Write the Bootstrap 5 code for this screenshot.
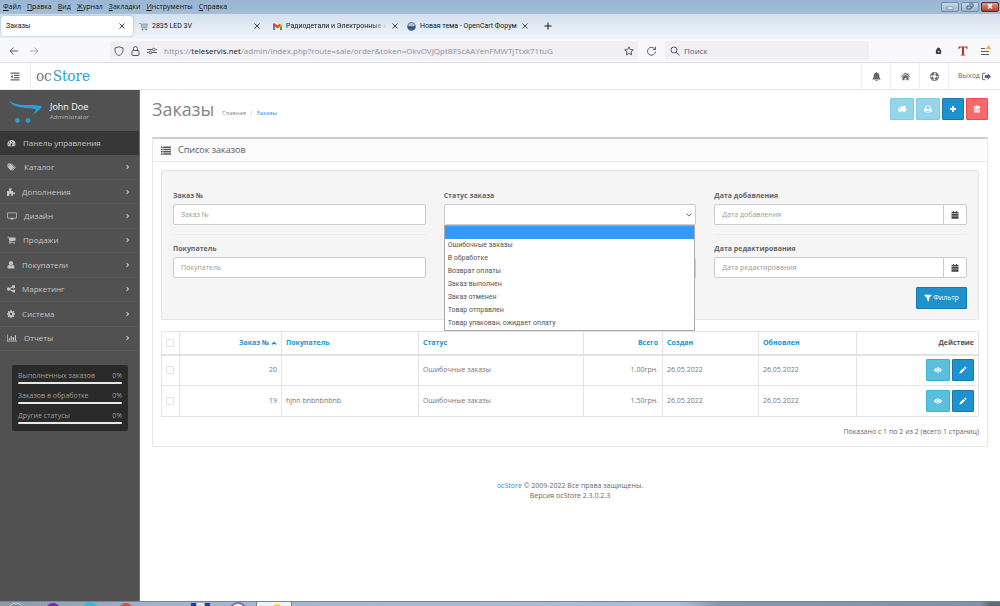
<!DOCTYPE html>
<html lang="ru">
<head>
<meta charset="utf-8">
<meta name="viewport" content="width=device-width, initial-scale=1">
<title>Заказы</title>
<link href="https://cdn.jsdelivr.net/npm/bootstrap@5.3.0/dist/css/bootstrap.min.css" rel="stylesheet">
<style>
:root{--blue:#1e91cf;--info:#5bc0de;--edge:#e8e8e8}
body{font:7px/10px "Open Sans","Noto Sans",sans-serif;color:#666;background:#fff}
button{font:inherit;color:inherit}
a{color:var(--blue);text-decoration:none}
svg{display:block;flex:none}
.ic{width:8px;height:8px;fill:currentColor}
.plain{background:none;border:0;padding:0}
/* browser frame */
.menubar{height:13px;background:linear-gradient(#9ab6d4,#a3bcd6);color:#111;padding-left:3px;gap:6px}
.winbtns{gap:2px;padding-right:1px}
.winbtn{width:18px;height:10px;border:1px solid #6f8cab;border-radius:2px;background:linear-gradient(#c9d8e8,#9db6d0);padding:0}
.winbtn.quit{background:linear-gradient(#dc9a8c,#b93a22);border-color:#6b2a24}
.winbtn svg{margin:auto}
.tabstrip{height:26px;background:linear-gradient(#d3e0ee,#f0f5fc);color:#15141a;padding:2px 1px 3px;border-top:1px solid #a9bed4;font-family:Roboto,sans-serif}
.btab{width:134px;padding:0 7px 0 5px;gap:4px}
.btab.active{width:132px;margin-right:1px;background:#fff;border-radius:3px;box-shadow:0 0 2px #8899aa}
.btab .fav{width:9px;height:9px}
.btab .label{white-space:nowrap;flex:1 1 auto;text-align:left}
.btab .ic{color:#444}
.btab .fade-end{-webkit-mask:linear-gradient(90deg,#000 85%,transparent)}
.addrbar{height:24px;background:#f9f9fb;border-bottom:1px solid #dcdce0;color:#5b5b66;font-size:8px}
.urlbox{background:#f0f0f4;height:19px;border-radius:2px;gap:7px}
.urlbox.location{margin-left:70px}
.urlbox.searchbox{flex:0 0 204px;gap:4px}
.tools{flex:0 0 131px}
.urlbox input{font:inherit;border:0;background:none;color:#5b5b66;padding:0;min-width:0}
.url{color:#8f8f98;white-space:nowrap}
.url b{font-weight:400;color:#15141a}
.stroke{fill:none;stroke:currentColor;stroke-width:1}
/* store header */
.topbar{height:27px;border-bottom:1px solid #e6e6e6}
.topbar .cell{width:29px;border-left:1px solid #eee;display:flex;align-items:center;justify-content:center;color:#666}
.topbar .cell .ic{width:9px;height:9px}
.topbar .cell.exit{width:52px;gap:2px}
.topbar .toggle{width:31px;border:0;border-right:1px solid #eee;background:none;padding:0}
.logo{font:15px/20px "DejaVu Serif Condensed","DejaVu Serif",serif;color:#777;padding-left:5px;gap:1px}
.logo span{color:#2a9fd0}
/* sidebar */
.side{width:140px;background:#515151;border-right:1px solid #6e6e6e;color:#c4c4c4}
.profile{height:41px;padding:2px 0 0 9px;gap:8px;color:#b5b5b5;font-size:6px;line-height:9px}
.profile strong{display:block;color:#fff;font-size:9px;font-weight:400;line-height:12px}
.sidemenu{height:220px;font-size:8px}
.sidemenu li{border-bottom:1px solid #595959;display:flex}
.sidemenu a{color:#c4c4c4;padding:0 8px 0 7px;gap:7px}
.sidemenu li.active{background:#373737;border-color:#373737}
.stats{margin:14px 11px 0 12px;background:#2a2a2a;border-radius:2px;padding:6px 6px 0;color:#9d9d9d;height:66px;gap:7px}
.stats .progress{height:2px;background:#e8e8e8;border-radius:1px;margin-top:1px}
/* content */
.page{padding:7px 13px 0 12px}
h1{font-size:18px;line-height:24px;color:#848484;margin:0}
.breadcrumb{font-size:6px;gap:4px;padding-top:7px}
.breadcrumb a.home{color:#8a8a8a}
.btn{--bs-btn-padding-x:0;--bs-btn-padding-y:0;--bs-btn-font-size:7px;--bs-btn-line-height:10px;--bs-btn-border-radius:1px;height:22px;width:24px;display:inline-flex;align-items:center;justify-content:center;color:#fff}
.btn .ic{width:8px;height:8px}
.btn-primary{--bs-btn-bg:#1e91cf;--bs-btn-border-color:#1978ab;width:22px}
.btn-info,.btn-info:disabled{background:var(--info);border-color:#39b3d7;color:#fff}
.btn-danger{--bs-btn-bg:#f56b6b;--bs-btn-border-color:#f24545;width:22px}
.btnrow{gap:2px}
.panel{border:1px solid var(--edge);border-top:2px solid #cfcfcf;margin-top:16px}
.panel-head{height:23px;background:#fcfcfc;border-bottom:1px solid var(--edge);padding-left:8px;gap:7px;font-size:9px;color:#595959}
.panel-main{padding:8px 8px 9px}
.filters{background:#f5f5f5;border:1px solid #e4e4e4;border-radius:2px;padding:10px 11px 11px;margin-bottom:11px;height:150px}
.filters .cols{display:grid;grid-template-columns:repeat(3,1fr);column-gap:18px}
.grp{height:53px;padding-top:10px}
.grp + .grp{border-top:1px solid #ededed;padding-top:9px}
.grp label{display:block;font-weight:700;margin-bottom:3px}
.form-control,.form-select{font-size:7px;line-height:10px;height:21px;min-height:0;padding:0 7px;border:1px solid #ccc;border-radius:2px;color:#555}
.form-control::placeholder{color:#999}
.form-select{background-size:6px 6px;background-position:right 3px center;border-radius:2px}
.input-group .btn-cal{width:24px;height:21px;border:1px solid #ccc;background:#fff;color:#444;border-radius:0 2px 2px 0}
.optlist{position:absolute;top:100%;left:0;right:1px;z-index:5;background:#fff;border:1px solid #aaa;font:7px/13px Roboto,"Liberation Sans",sans-serif;color:#555}
.optlist li{height:13px;padding-left:3px}
.optlist li.on{background:#3399ff}
.btn.apply{width:51px;height:22px;gap:1px}
.orders{table-layout:fixed;margin:0 0 10px;color:#777;border:1px solid #ddd;--bs-table-bg:transparent}
.orders th,.orders td{border:1px solid #e4e4e4;padding:0 4px;vertical-align:middle;color:#777}
.orders th{height:23px;font-weight:700;border-bottom:2px solid #e2e2e2;color:#555}
.orders td{height:31px}
.orders .form-check-input{width:8px;height:8px;margin:0;border:1px solid #e2e2e2;border-radius:1px;display:block}
.orders .caret{display:inline-block;width:6px;height:6px}
.foot{margin-top:34px}
.taskbar{height:5px;overflow:hidden;border-top:1px solid #76859a;background:linear-gradient(90deg,#8898a8 0,#9db6d0 16%,#a5c0df 68%,#8497b2 72%,#8093ae 98%,#5f6a78 99%)}
.taskbar button{width:36px;height:16px;flex:none}
.taskbar .open{background:#eef3f8;border:1px solid #6d7c8c;border-width:0 1px}
</style>
</head>
<body class="d-flex flex-column min-vh-100">
<svg width="0" height="0" class="position-absolute" aria-hidden="true">
<symbol id="x" viewBox="0 0 8 8"><path d="M1.500 1.500l5 5M6.500 1.500l-5 5" fill="none" stroke="currentColor" stroke-width="1"/></symbol>
<symbol id="outdent" viewBox="0 0 16 16"><path d="M0 1h16v2H0zM6 5h10v2H6zM6 9h10v2H6zM0 13h16v2H0zM4 4.500v7L0 8z"/></symbol>
<symbol id="bell" viewBox="0 0 16 16"><path d="M8 0c.7 0 1.100.5 1.100 1.200C11.500 1.700 13 3.700 13 6c0 3.500 1 5.400 2.500 6.800V13.500H.5v-.7C2 11.400 3 9.500 3 6c0-2.300 1.500-4.300 3.900-4.800C6.900.5 7.300 0 8 0zM6 14h4a2 2 0 0 1-4 0z"/></symbol>
<symbol id="home" viewBox="0 0 16 16"><path d="M8 1l3.500 3V2h2v3.700L16 8l-1 1.200L8 3.200 1 9.200 0 8zM8 4.500l5.500 4.700V14.500h-4v-4h-3v4h-4V9.200z"/></symbol>
<symbol id="ring" viewBox="0 0 16 16"><path d="M8 0a8 8 0 1 1 0 16A8 8 0 0 1 8 0zm0 1.200a6.800 6.800 0 1 0 0 13.600A6.800 6.800 0 0 0 8 1.200z" fill-rule="evenodd"/><circle cx="8" cy="8" r="5.300" fill="none" stroke="currentColor" stroke-width="3.600" stroke-dasharray="5.200 3.125" stroke-dashoffset="-1.560"/><circle cx="8" cy="8" r="3.700" fill="none" stroke="currentColor" stroke-width=".9"/></symbol>
<symbol id="exit" viewBox="0 0 16 16"><path d="M6 1.500v1.600H3.200c-1 0-1.600.6-1.600 1.600v6.600c0 1 .6 1.600 1.600 1.600H6v1.600H3A3 3 0 0 1 0 11.500v-7a3 3 0 0 1 3-3zM10 2l6 6-6 6v-3.500H5v-5h5z"/></symbol>
<symbol id="gauge" viewBox="0 0 16 16"><path fill-rule="evenodd" d="M8 2a8 8 0 0 1 8 8c0 1.500-.4 3-1.200 4.300H1.200A8 8 0 0 1 8 2zM8 3.300a1.100 1.100 0 1 0 0 2.200 1.100 1.100 0 0 0 0-2.200zM4 5a1.100 1.100 0 1 0 0 2.200A1.100 1.100 0 0 0 4 5zM2.300 9a1.100 1.100 0 1 0 0 2.200 1.100 1.100 0 0 0 0-2.200zM13.700 9a1.100 1.100 0 1 0 0 2.200 1.100 1.100 0 0 0 0-2.200zM9.400 5.800L7.900 9.500a1.800 1.800 0 1 0 1.200.4l1.500-3.700z"/></symbol>
<symbol id="tags" viewBox="0 0 18 16"><path fill-rule="evenodd" d="M0 2.500C0 1.600.6 1 1.500 1h4.700L13 7.800c.5.5.5 1.200 0 1.700l-5 5c-.5.5-1.200.5-1.700 0L0 8zM3 2.800a1.300 1.300 0 1 0 0 2.600 1.300 1.300 0 0 0 0-2.600z"/><path d="M7.800 1H9l7 6.800c.5.5.5 1.200 0 1.700l-5 5c-.6.6-1.400.4-1.900-.1L14.500 9V8z"/></symbol>
<symbol id="puzzle" viewBox="0 0 16 16"><path d="M0 6h4.800c0-1-1.100-1.500-1.100-3C3.700 1.300 4.900.3 6.500.3S9.300 1.300 9.300 3c0 1.500-1.100 2-1.100 3H12v3.200c.8 0 1-.9 2.200-.9 1.100 0 1.800.9 1.800 2.100s-.7 2.200-1.800 2.200c-1.200 0-1.400-.9-2.200-.9V16H8.200c0-1.300.7-1.700.7-2.700S8 11.600 6.500 11.600s-2.200.7-2.200 1.700.7 1.400.7 2.700H0z"/></symbol>
<symbol id="screen" viewBox="0 0 20 16"><path fill-rule="evenodd" d="M2 1h16c1 0 1.500.5 1.500 1.500v9c0 1-.5 1.500-1.500 1.500h-5v1.800H7V13H2C1 13 .5 12.500.5 11.500v-9C.5 1.500 1 1 2 1zm0 1.400v9h16v-9z"/></symbol>
<symbol id="cart" viewBox="0 0 18 16"><path d="M1 1.500h3l.4 1.700H17v6.300L6 10.800l-.2 1H15.500V13H4.200l.6-2.300L3 2.800H1zM5 13h2.400v2.500H5zM13 13h2.400v2.500H13z"/></symbol>
<symbol id="user" viewBox="0 0 14 16"><path d="M7 0a4 4 0 0 1 4 4.300C11 6.800 9.400 8.800 7 8.800S3 6.800 3 4.300A4 4 0 0 1 7 0zM3.300 8.200A5 5 0 0 0 7 9.700a5 5 0 0 0 3.700-1.500c2.300.2 3.300 2.200 3.300 4.600 0 1.600-.9 2.400-2.200 2.400H2.200C.9 15.200 0 14.400 0 12.800c0-2.400 1-4.400 3.300-4.600z"/></symbol>
<symbol id="share" viewBox="0 0 16 16"><path d="M13 8.800a3.200 3.200 0 1 1-3 3.500L5.700 10.200a3.200 3.200 0 1 1 0-4.400L10 3.700a3.200 3.200 0 1 1 .9 2L6.500 7.700v.6l4.400 2A3 3 0 0 1 13 8.800z"/></symbol>
<symbol id="cog" viewBox="0 0 16 16"><path fill-rule="evenodd" d="M6.800 0h2.400l.4 2.300 1.300.6 1.900-1.400 1.800 1.800-1.400 1.900.6 1.300 2.200.4v2.400l-2.200.4-.6 1.300 1.400 1.900-1.800 1.800-1.900-1.400-1.300.6-.4 2.100H6.800l-.4-2.100-1.300-.6-1.900 1.400-1.800-1.800L2.800 11l-.6-1.300L0 9.300V6.900l2.200-.4.6-1.300-1.400-1.900 1.800-1.800 1.900 1.400 1.300-.6zM8 5.500a2.500 2.500 0 1 0 0 5 2.500 2.500 0 0 0 0-5z"/></symbol>
<symbol id="chart" viewBox="0 0 20 16"><path d="M0 1h1.400v12.600H20V15H0zM3.500 8.500H6v4H3.500zM7.500 4H10v8.500H7.500zM11.500 6.500H14v6h-2.500zM15.500 2.500H18v10h-2.500z"/></symbol>
<symbol id="right" viewBox="0 0 8 8"><path d="M2.800 1.800L5.200 4 2.800 6.200" fill="none" stroke="currentColor" stroke-width="1.200"/></symbol>
<symbol id="truck" viewBox="0 0 16 16"><path fill-rule="evenodd" d="M16 2v10.500h-1.500a2.200 2.200 0 0 1-4.400 0H6.900a2.200 2.200 0 0 1-4.400 0H0V8l3-3.800h3V2zM5.600 5.500H3.700L1.500 8.200h4.100z"/></symbol>
<symbol id="print" viewBox="0 0 16 16"><path fill-rule="evenodd" d="M3 1h8l2 2v4h1.500c1 0 1.500.6 1.500 1.500V13h-3v2H3v-2H0V8.500C0 7.600.5 7 1.500 7H3zm1.400 1.400V8h7.200V4H10V2.400zM4.400 11v2.700h7.200V11z"/></symbol>
<symbol id="plus" viewBox="0 0 16 16"><path d="M6.200 2h3.600v4.200H14v3.600H9.800V14H6.200V9.800H2V6.200h4.200z"/></symbol>
<symbol id="trash" viewBox="0 0 16 16"><path fill-rule="evenodd" d="M5.500 1h5l.8 2H15v1.500h-1.500V15h-11V4.500H1V3h3.700zM5 6v7h1V6zm2.500 0v7h1V6zM10 6v7h1V6z"/></symbol>
<symbol id="list" viewBox="0 0 18 16"><path d="M0 1h3v2.500H0zM4 1h14v2.500H4zM0 5h3v2.500H0zM4 5h14v2.500H4zM0 9h3v2.500H0zM4 9h14v2.500H4zM0 13h3v2.500H0zM4 13h14v2.500H4z"/></symbol>
<symbol id="cal" viewBox="0 0 16 16"><path d="M4 0h2v2h4V0h2v2h3v3H1V2h3zM1 6h14v2.300H1zM1 9h14v2.300H1zM1 12h14v3.500H1z"/></symbol>
<symbol id="funnel" viewBox="0 0 16 16"><path d="M1 1.500h14v1.700L10 8v7.500L6 12V8L1 3.200z"/></symbol>
<symbol id="eye" viewBox="0 0 16 16"><path fill-rule="evenodd" d="M8 3c3.200 0 6.200 2 8 5-1.800 3-4.800 5-8 5S1.800 11 0 8c1.800-3 4.800-5 8-5zM8 4.300a3.700 3.700 0 1 0 0 7.400 3.700 3.700 0 0 0 0-7.400z"/><circle cx="8" cy="8" r="2.600"/></symbol>
<symbol id="pencil" viewBox="0 0 16 16"><path d="M1 15l.8-4L9 3.800 12.200 7 5 14.200zM10 2.800l1.500-1.500c.5-.5 1.100-.5 1.600 0l1.600 1.600c.5.5.5 1.100 0 1.600L13.200 6z"/></symbol>
</svg>

<nav class="menubar d-flex align-items-center" aria-label="Меню браузера">
  <button class="plain"><u>Ф</u>айл</button><button class="plain"><u>П</u>равка</button><button class="plain"><u>В</u>ид</button><button class="plain"><u>Ж</u>урнал</button><button class="plain"><u>З</u>акладки</button><button class="plain"><u>И</u>нструменты</button><button class="plain"><u>С</u>правка</button>
  <div class="winbtns d-flex ms-auto">
    <button class="winbtn" aria-label="Свернуть"><svg width="8" height="6"><path d="M1 3h6v2H1z" fill="#fff" stroke="#567" stroke-width=".5"/></svg></button>
    <button class="winbtn" aria-label="Развернуть"><svg width="8" height="7"><path d="M3 1h4v3H5M1 3h4v3H1z" fill="none" stroke="#4c5f73"/></svg></button>
    <button class="winbtn quit" aria-label="Закрыть"><svg width="8" height="7"><path d="M2 1l4 4.500M6 1L2 5.500" stroke="#fff" stroke-width="1.600"/></svg></button>
  </div>
</nav>

<div class="tabstrip d-flex">
  <div class="btab active d-flex align-items-center"><button class="plain label">Заказы</button><button class="plain" aria-label="Закрыть вкладку"><svg class="ic"><use href="#x"/></svg></button></div>
  <div class="btab d-flex align-items-center"><svg class="fav" viewBox="0 0 18 18"><path d="M0 3h4l2 9h9l2-8H5" fill="#b9bdc2" stroke="#8b9096" stroke-width="1.500"/><circle cx="7" cy="15" r="1.700" fill="#777"/><circle cx="14" cy="15" r="1.700" fill="#777"/></svg><button class="plain label">2835 LED 3V</button><button class="plain" aria-label="Закрыть вкладку"><svg class="ic"><use href="#x"/></svg></button></div>
  <div class="btab d-flex align-items-center"><svg class="fav" viewBox="0 0 18 18"><path d="M0 4v12h4V8z" fill="#4285f4"/><path d="M18 4v12h-4V8z" fill="#34a853"/><path d="M14 4l4-1v4l-4 3z" fill="#fbbc04"/><path d="M0 3l4 0 5 4 5-4v6l-5 4-9-7z" fill="#ea4335"/></svg><button class="plain label fade-end">Радиодетали и Электронные к</button><button class="plain" aria-label="Закрыть вкладку"><svg class="ic"><use href="#x"/></svg></button></div>
  <div class="btab d-flex align-items-center"><svg class="fav" viewBox="0 0 18 18"><circle cx="9" cy="9" r="8.500" fill="#3d608c"/><ellipse cx="9" cy="6" rx="6.500" ry="4" fill="#a9bfd8"/><path d="M2 10h14" stroke="#223c5e" stroke-width="2"/></svg><button class="plain label">Новая тема - OpenCart Форум</button><button class="plain" aria-label="Закрыть вкладку"><svg class="ic"><use href="#x"/></svg></button></div>
  <button class="plain ps-2" aria-label="Новая вкладка"><svg class="ic stroke" viewBox="0 0 8 8"><path d="M4 .5v7M.5 4h7"/></svg></button>
</div>

<div class="addrbar d-flex align-items-center">
  <button class="plain ms-2" aria-label="Назад"><svg width="12" height="10" class="stroke"><path d="M10 5H2M5.500 1.500L2 5l3.500 3.500"/></svg></button>
  <button class="plain ms-2 opacity-50" aria-label="Вперёд"><svg width="12" height="10" class="stroke"><path d="M2 5h8M6.500 1.500L10 5 6.500 8.500"/></svg></button>
  <div class="urlbox location d-flex align-items-center flex-grow-1 px-1">
    <svg width="10" height="10" class="stroke"><path d="M5 .8l4 1.200v2.500C9 7 7.500 8.500 5 9.500 2.500 8.500 1 7 1 4.500V2z"/></svg>
    <svg width="9" height="10" class="stroke"><rect x="1" y="4.500" width="7" height="5" rx="1"/><path d="M2.500 4.500v-2a2 2 0 0 1 4 0v2"/></svg>
    <svg width="10" height="8" class="stroke"><path d="M0 2.500h5M8.500 2.500H10M0 5.500h1.500M5 5.500h5"/><circle cx="6.700" cy="2.500" r="1.300"/><circle cx="3.300" cy="5.500" r="1.300"/></svg>
    <span class="url flex-grow-1">https://<b>teleservis.net</b>/admin/index.php?route=sale/order&amp;token=OkvOVJQptBFScAAYenFMWTjTtxk71tuG</span>
    <button class="plain" aria-label="В закладки"><svg width="10" height="10" class="stroke"><path d="M5 .8l1.300 2.800 3 .3-2.300 2 .7 3L5 7.400 2.300 8.900l.7-3-2.300-2 3-.3z"/></svg></button>
  </div>
  <button class="plain ms-2 me-2" aria-label="Обновить"><svg width="11" height="10" class="stroke"><path d="M8.800 3A4 4 0 1 0 9.500 5.500M9.500.8v2.700H6.800"/></svg></button>
  <div class="urlbox searchbox d-flex align-items-center px-1"><svg width="11" height="10" class="stroke"><circle cx="5" cy="4" r="3"/><path d="M7.200 6.200L10.500 9.500"/></svg><input type="text" value="Поиск" aria-label="Поиск" class="flex-grow-1"></div>
  <div class="tools d-flex align-items-center justify-content-end pe-2">
    <svg width="7" height="7" viewBox="0 0 16 16" fill="#444"><path fill-rule="evenodd" d="M4 5a4 4 0 0 1 8 0l2 2v7a3 3 0 0 1-3 2H5a3 3 0 0 1-3-2V7zm3 4v3h3V9z"/></svg>
    <svg width="10" height="10" class="ms-3 me-2" viewBox="0 0 20 20" fill="#c22d1d"><path d="M1 1h18v5h-1.500L16 3h-4v14l2.500 1v1h-9v-1L8 17V3H4L2.500 6H1z"/></svg>
    <button class="plain ms-1" aria-label="Меню"><svg width="12" height="12"><path d="M1 3.500h4M1 6.500h8M1 9.500h8" stroke="#5b5b66"/><path d="M8.500 0l2.500 4H6z" fill="#ffa436"/></svg></button>
  </div>
</div>

<header class="topbar d-flex">
  <button class="toggle d-flex align-items-center justify-content-center" aria-label="Свернуть меню"><svg class="ic" style="width:10px;height:9px"><use href="#outdent"/></svg></button>
  <a href="#" class="logo d-flex align-items-center">oc<span>Store</span></a>
  <nav class="d-flex ms-auto">
    <a href="#" class="cell" aria-label="Уведомления"><svg class="ic"><use href="#bell"/></svg></a>
    <a href="#" class="cell" aria-label="Магазин"><svg class="ic"><use href="#home"/></svg></a>
    <a href="#" class="cell" aria-label="Помощь"><svg class="ic"><use href="#ring"/></svg></a>
    <a href="#" class="cell exit">Выход<svg class="ic"><use href="#exit"/></svg></a>
  </nav>
</header>

<div class="d-flex flex-grow-1">
  <aside class="side flex-shrink-0">
    <div class="profile d-flex align-items-center">
      <svg width="33" height="24" viewBox="0 0 33 24" fill="#23a1d8"><path d="M0 0C2 3.500 9 5 17 5c9 0 15.500.5 15.500 1.800 0 1.700-5 5.500-9 8.700 1.500-2.500 4-5 3-6C25 8 17 8.500 10 7 4 5.500 1 3.500 0 0z"/><circle cx="8.500" cy="20.500" r="2.400"/><circle cx="19" cy="20.500" r="2.400"/></svg>
      <div><strong>John Doe</strong>Administrator</div>
    </div>
    <ul class="sidemenu list-unstyled d-flex flex-column mb-0" id="sidemenu"></ul>
    <div class="stats d-flex flex-column">
      <div><div class="d-flex justify-content-between"><span>Выполненных заказов</span><span>0%</span></div><div class="progress"></div></div>
      <div><div class="d-flex justify-content-between"><span>Заказов в обработке</span><span>0%</span></div><div class="progress"></div></div>
      <div><div class="d-flex justify-content-between"><span>Другие статусы</span><span>0%</span></div><div class="progress"></div></div>
    </div>
  </aside>

  <main class="page flex-grow-1">
    <div class="d-flex align-items-center">
      <h1 class="fw-normal">Заказы</h1>
      <nav class="ms-2" aria-label="Навигация"><ol class="breadcrumb mb-0"><li><a href="#" class="home">Главная</a></li><li class="opacity-50">/</li><li><a href="#">Заказы</a></li></ol></nav>
      <div class="btnrow d-flex ms-auto">
        <button class="btn btn-info" disabled aria-label="Доставка"><svg class="ic"><use href="#truck"/></svg></button>
        <button class="btn btn-info" disabled aria-label="Печать"><svg class="ic"><use href="#print"/></svg></button>
        <button class="btn btn-primary" aria-label="Добавить"><svg class="ic"><use href="#plus"/></svg></button>
        <button class="btn btn-danger" aria-label="Удалить"><svg class="ic"><use href="#trash"/></svg></button>
      </div>
    </div>

    <section class="panel">
      <div class="panel-head d-flex align-items-center"><svg class="ic" style="width:10px;height:9px"><use href="#list"/></svg>Список заказов</div>
      <div class="panel-main">
        <form class="filters">
          <div class="cols">
            <div>
              <div class="grp"><label for="oid">Заказ №</label><input id="oid" class="form-control" type="text" placeholder="Заказ №"></div>
              <div class="grp"><label for="cust">Покупатель</label><input id="cust" class="form-control" type="text" placeholder="Покупатель"></div>
            </div>
            <div>
              <div class="grp"><label for="st">Статус заказа</label>
                <div class="position-relative"><select id="st" class="form-select"><option></option></select>
                  <ul class="optlist list-unstyled mb-0" role="listbox" aria-label="Статус заказа">
                    <li class="on" role="option" aria-selected="true"></li><li role="option">Ошибочные заказы</li><li role="option">В обработке</li><li role="option">Возврат оплаты</li><li role="option">Заказ выполнен</li><li role="option">Заказ отменен</li><li role="option">Товар отправлен</li><li role="option">Товар упакован, ожидает оплату</li>
                  </ul></div>
              </div>
              <div class="grp d-flex flex-column justify-content-end pb-2"><input class="form-control" type="text" aria-label="Всего"></div>
            </div>
            <div>
              <div class="grp"><label for="d1">Дата добавления</label><div class="input-group flex-nowrap"><input id="d1" class="form-control" type="text" placeholder="Дата добавления"><button type="button" class="btn btn-cal" aria-label="Календарь"><svg class="ic"><use href="#cal"/></svg></button></div></div>
              <div class="grp"><label for="d2">Дата редактирования</label><div class="input-group flex-nowrap"><input id="d2" class="form-control" type="text" placeholder="Дата редактирования"><button type="button" class="btn btn-cal" aria-label="Календарь"><svg class="ic"><use href="#cal"/></svg></button></div></div>
            </div>
          </div>
          <div class="d-flex justify-content-end"><button type="button" class="btn btn-primary apply"><svg class="ic"><use href="#funnel"/></svg>Фильтр</button></div>
        </form>

        <table class="table orders w-100">
          <colgroup><col style="width:18px"><col style="width:102px"><col style="width:137px"><col style="width:165px"><col style="width:79px"><col style="width:96px"><col style="width:98px"><col style="width:122px"></colgroup>
          <thead><tr>
            <th><input class="form-check-input" type="checkbox" aria-label="Выбрать все"></th>
            <th class="text-end"><a href="#">Заказ № <svg class="caret" viewBox="0 0 8 8"><path d="M1 6l3-3 3 3" fill="none" stroke="currentColor" stroke-width="1.500"/></svg></a></th>
            <th><a href="#">Покупатель</a></th><th><a href="#">Статус</a></th><th class="text-end"><a href="#">Всего</a></th><th><a href="#">Создан</a></th><th><a href="#">Обновлен</a></th><th class="text-end">Действие</th>
          </tr></thead>
          <tbody>
            <tr><td><input class="form-check-input" type="checkbox" aria-label="Заказ 20"></td><td class="text-end">20</td><td></td><td>Ошибочные заказы</td><td class="text-end">1.00грн.</td><td>26.05.2022</td><td>26.05.2022</td>
              <td><div class="btnrow d-flex justify-content-end"><button class="btn btn-info" aria-label="Просмотр"><svg class="ic"><use href="#eye"/></svg></button><button class="btn btn-primary" aria-label="Изменить"><svg class="ic"><use href="#pencil"/></svg></button></div></td></tr>
            <tr><td><input class="form-check-input" type="checkbox" aria-label="Заказ 19"></td><td class="text-end">19</td><td>hjnn bnbnbnbnb</td><td>Ошибочные заказы</td><td class="text-end">1.50грн.</td><td>26.05.2022</td><td>26.05.2022</td>
              <td><div class="btnrow d-flex justify-content-end"><button class="btn btn-info" aria-label="Просмотр"><svg class="ic"><use href="#eye"/></svg></button><button class="btn btn-primary" aria-label="Изменить"><svg class="ic"><use href="#pencil"/></svg></button></div></td></tr>
          </tbody>
        </table>
        <div class="text-end">Показано с 1 по 2 из 2 (всего 1 страниц)</div>
      </div>
    </section>
    <footer class="foot text-center"><a href="#">ocStore</a> © 2009-2022 Все права защищены.<br>Версия ocStore 2.3.0.2.3</footer>
  </main>
</div>

<div class="taskbar d-flex">
  <button class="plain" aria-label="Пуск"><svg width="36" height="16"><circle cx="16" cy="9" r="8" fill="#7a9aac" stroke="#c9d8e0"/></svg></button>
  <button class="plain" aria-label="Приложение 1"><svg width="36" height="16"><circle cx="17" cy="8" r="7" fill="#7b22b8"/></svg></button>
  <button class="plain" aria-label="Приложение 2"><svg width="36" height="16"><circle cx="18" cy="8" r="8" fill="#2bbcd8"/></svg></button>
  <button class="plain" aria-label="Приложение 3"><svg width="36" height="16"><circle cx="18" cy="8" r="7" fill="#d8503c"/></svg></button>
  <button class="plain" aria-label="Приложение 4"></button>
  <button class="plain" aria-label="Приложение 5"><svg width="36" height="16"><path d="M11 1h5v12h-5zM25 1h5v12h-5z" fill="#1c3fae"/><path d="M17 1h7v9h-7z" fill="#dfe4ee"/></svg></button>
  <button class="plain" aria-label="Приложение 6"><svg width="36" height="16"><circle cx="22" cy="9" r="8" fill="#fff" stroke="#7470c8" stroke-width="2"/></svg></button>
  <button class="plain open ms-1" aria-label="Приложение 7"><svg width="36" height="16"><circle cx="20" cy="7" r="5" fill="#f3d04a"/></svg></button>
</div>

<script>
const items=[['gauge',9,'Панель управления'],['tags',10,'Каталог'],['puzzle',8,'Дополнения'],['screen',10,'Дизайн'],['cart',9,'Продажи'],['user',8,'Покупатели'],['share',8,'Маркетинг'],['cog',8,'Система'],['chart',10,'Отчеты']];
document.getElementById('sidemenu').innerHTML=items.map(([icon,w,text],i)=>
 `<li class="flex-fill ${i?'':'active'}"><a href="#" class="d-flex align-items-center w-100"><svg class="ic" style="width:${w}px"><use href="#${icon}"/></svg><span class="flex-grow-1">${text}</span>${i?'<svg class="ic" style="width:7px"><use href="#right"/></svg>':''}</a></li>`).join('');
</script>
<script src="https://cdn.jsdelivr.net/npm/bootstrap@5.3.0/dist/js/bootstrap.bundle.min.js"></script>
</body>
</html>
